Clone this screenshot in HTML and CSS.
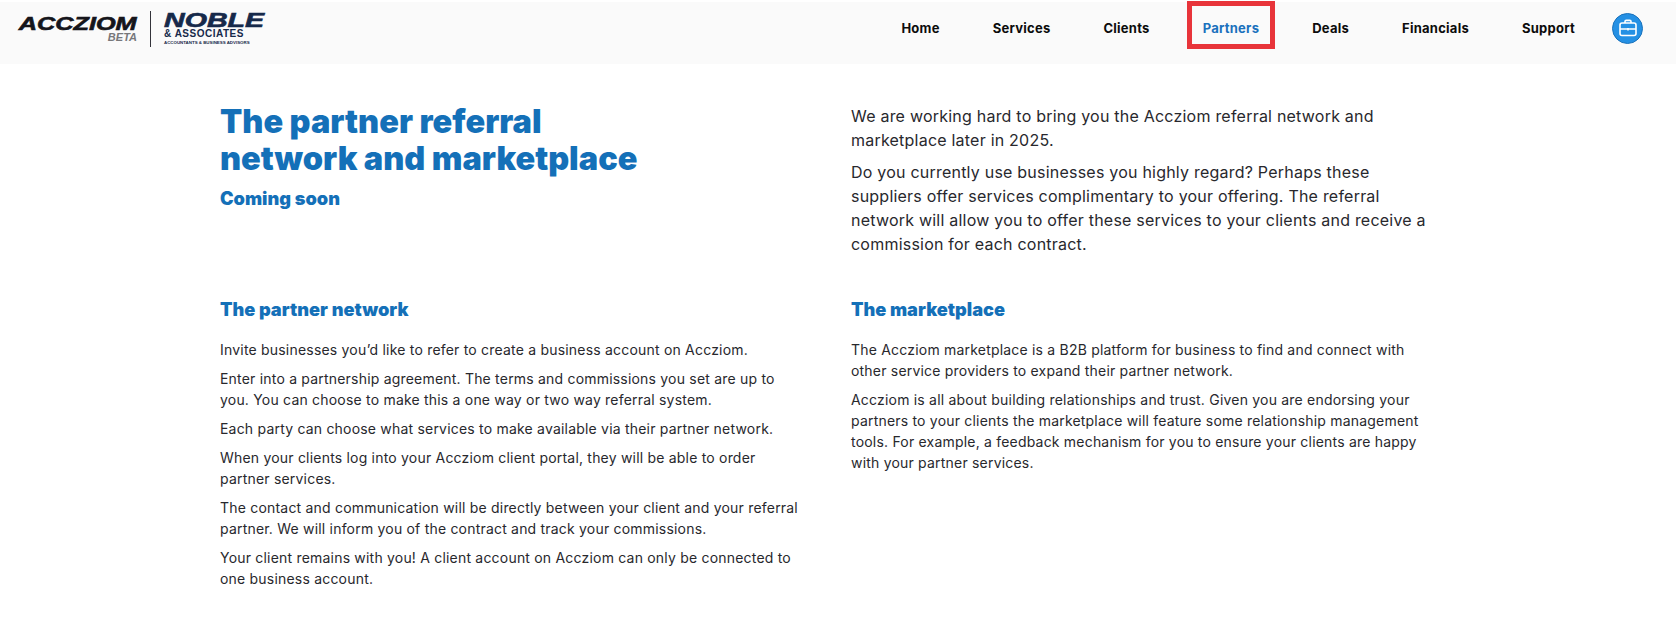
FILE: index.html
```html
<!DOCTYPE html>
<html lang="en">
<head>
    <meta charset="UTF-8">
    <meta name="viewport" content="width=device-width, initial-scale=1.0">
    <title>Accziom - Partners</title>
    <link rel="stylesheet" href="styles.css">
</head>
<body>
    <header class="topbar">
        <div class="brand">
            <div class="brand-main">
                <span class="brand-name">ACCZIOM</span>
                <span class="brand-beta">BETA</span>
            </div>
            <div class="brand-rule"></div>
            <div class="brand-firm">
                <span class="firm-name">NOBLE</span>
                <span class="firm-sub">&amp; ASSOCIATES</span>
                <span class="firm-tag">ACCOUNTANTS &amp; BUSINESS ADVISORS</span>
            </div>
        </div>
        <nav class="nav">
            <a href="#" class="nav-link">Home</a>
            <a href="#" class="nav-link">Services</a>
            <a href="#" class="nav-link">Clients</a>
            <a href="#" class="nav-link active">Partners</a>
            <a href="#" class="nav-link">Deals</a>
            <a href="#" class="nav-link">Financials</a>
            <a href="#" class="nav-link">Support</a>
        </nav>
        <div class="avatar">
            <svg width="20" height="20" viewBox="0 0 20 20" fill="none" stroke="#fff" stroke-width="1.6">
                <path d="M7 5V3.6C7 2.9 7.5 2.4 8.2 2.4h3.6c.7 0 1.2.5 1.2 1.2V5"/>
                <rect x="2" y="5" width="16" height="12.5" rx="2"/>
                <path d="M2 11h16M10 10v2.4"/>
            </svg>
        </div>
    </header>

    <main class="content">
        <section class="row row-intro">
            <div class="col">
                <h1>The partner referral<br>network and marketplace</h1>
                <div class="soon">Coming soon</div>
            </div>
            <div class="col lead">
                <p>We are working hard to bring you the Accziom referral network and marketplace later in 2025.</p>
                <p>Do you currently use businesses you highly regard? Perhaps these suppliers offer services complimentary to your offering. The referral network will allow you to offer these services to your clients and receive a commission for each contract.</p>
            </div>
        </section>

        <section class="row">
            <div class="col detail">
                <h2>The partner network</h2>
                <p>Invite businesses you’d like to refer to create a business account on Accziom.</p>
                <p>Enter into a partnership agreement. The terms and commissions you set are up to you. You can choose to make this a one way or two way referral system.</p>
                <p>Each party can choose what services to make available via their partner network.</p>
                <p>When your clients log into your Accziom client portal, they will be able to order partner services.</p>
                <p>The contact and communication will be directly between your client and your referral partner. We will inform you of the contract and track your commissions.</p>
                <p>Your client remains with you! A client account on Accziom can only be connected to one business account.</p>
            </div>
            <div class="col detail">
                <h2>The marketplace</h2>
                <p>The Accziom marketplace is a B2B platform for business to find and connect with other service providers to expand their partner network.</p>
                <p>Accziom is all about building relationships and trust. Given you are endorsing your partners to your clients the marketplace will feature some relationship management tools. For example, a feedback mechanism for you to ensure your clients are happy with your partner services.</p>
            </div>
        </section>
    </main>
</body>
</html>
```

FILE: styles.css
```css
* {
    margin: 0;
    padding: 0;
    box-sizing: border-box;
}

body {
    font-family: Inter, "Liberation Sans", sans-serif;
    background: #fff;
    color: #2b2b2b;
}

.topbar {
    height: 62px;
    margin-top: 2px;
    background: #fafafa;
    display: flex;
    align-items: center;
    padding: 0 33px 0 4px;
}

.brand {
    display: flex;
    align-items: center;
    height: 36px;
    margin-top: -8px;
}

.brand-main {
    width: 133px;
    display: flex;
    flex-direction: column;
    align-items: flex-end;
}

.brand-name {
    font-family: "Liberation Sans", sans-serif;
    font-size: 19px;
    line-height: 17px;
    font-weight: 700;
    font-style: italic;
    color: #15151b;
    transform: scaleX(1.33);
    transform-origin: right center;
    -webkit-text-stroke: 0.6px #15151b;
}

.brand-beta {
    font-family: "Liberation Sans", sans-serif;
    font-size: 11px;
    line-height: 11px;
    font-weight: 700;
    font-style: italic;
    color: #77777a;
}

.brand-rule {
    width: 1px;
    height: 36px;
    background: #33333a;
    margin: 0 13px 0 13px;
}

.brand-firm {
    display: flex;
    flex-direction: column;
    color: #16294a;
    font-family: "Liberation Sans", sans-serif;
    font-weight: 700;
}

.firm-name {
    font-size: 20px;
    line-height: 17px;
    font-style: italic;
    transform: scaleX(1.43);
    transform-origin: left center;
    -webkit-text-stroke: 0.6px #16294a;
}

.firm-sub {
    font-size: 10px;
    line-height: 10px;
    letter-spacing: 0.5px;
    white-space: nowrap;
}

.firm-tag {
    font-size: 4.4px;
    line-height: 7px;
    white-space: nowrap;
}

.nav {
    margin-left: auto;
    display: flex;
    align-items: flex-start;
    align-self: flex-start;
    margin-top: -1px;
}

.nav-link {
    display: flex;
    align-items: center;
    height: 48px;
    padding: 5px 11px 0;
    margin-left: 21px;
    border: 5px solid transparent;
    font-size: 13px;
    font-weight: 700;
    letter-spacing: 0.25px;
    color: #0c0c0c;
    text-decoration: none;
}

.nav-link.active {
    color: #1a71bd;
    border-color: #e8343a;
}

.avatar {
    width: 31px;
    height: 31px;
    border-radius: 50%;
    background: #2490e4;
    border: 1px solid #1a72bb;
    display: flex;
    align-items: center;
    justify-content: center;
    margin-left: 21px;
    margin-top: -10px;
}

.content {
    width: 1236px;
    margin-left: 220px;
}

.row {
    display: grid;
    grid-template-columns: 631px 1fr;
}

.col {
    width: 585px;
}

.row-intro {
    padding-top: 39px;
    height: 234px;
}

.lead {
    padding-top: 1px;
}

h1 {
    font-size: 32.5px;
    line-height: 37px;
    font-weight: 900;
    color: #1470b8;
}

.soon {
    margin-top: 10px;
    font-size: 18.2px;
    line-height: 22px;
    font-weight: 900;
    color: #1470b8;
}

.lead p {
    font-size: 16px;
    line-height: 24px;
    letter-spacing: 0.22px;
    color: #28282d;
    margin-bottom: 8px;
}

h2 {
    font-size: 18.2px;
    line-height: 22px;
    font-weight: 900;
    color: #1470b8;
    margin-bottom: 19px;
}

.detail p {
    font-size: 14px;
    line-height: 21px;
    letter-spacing: 0.2px;
    color: #28282d;
    margin-bottom: 8px;
}
```
